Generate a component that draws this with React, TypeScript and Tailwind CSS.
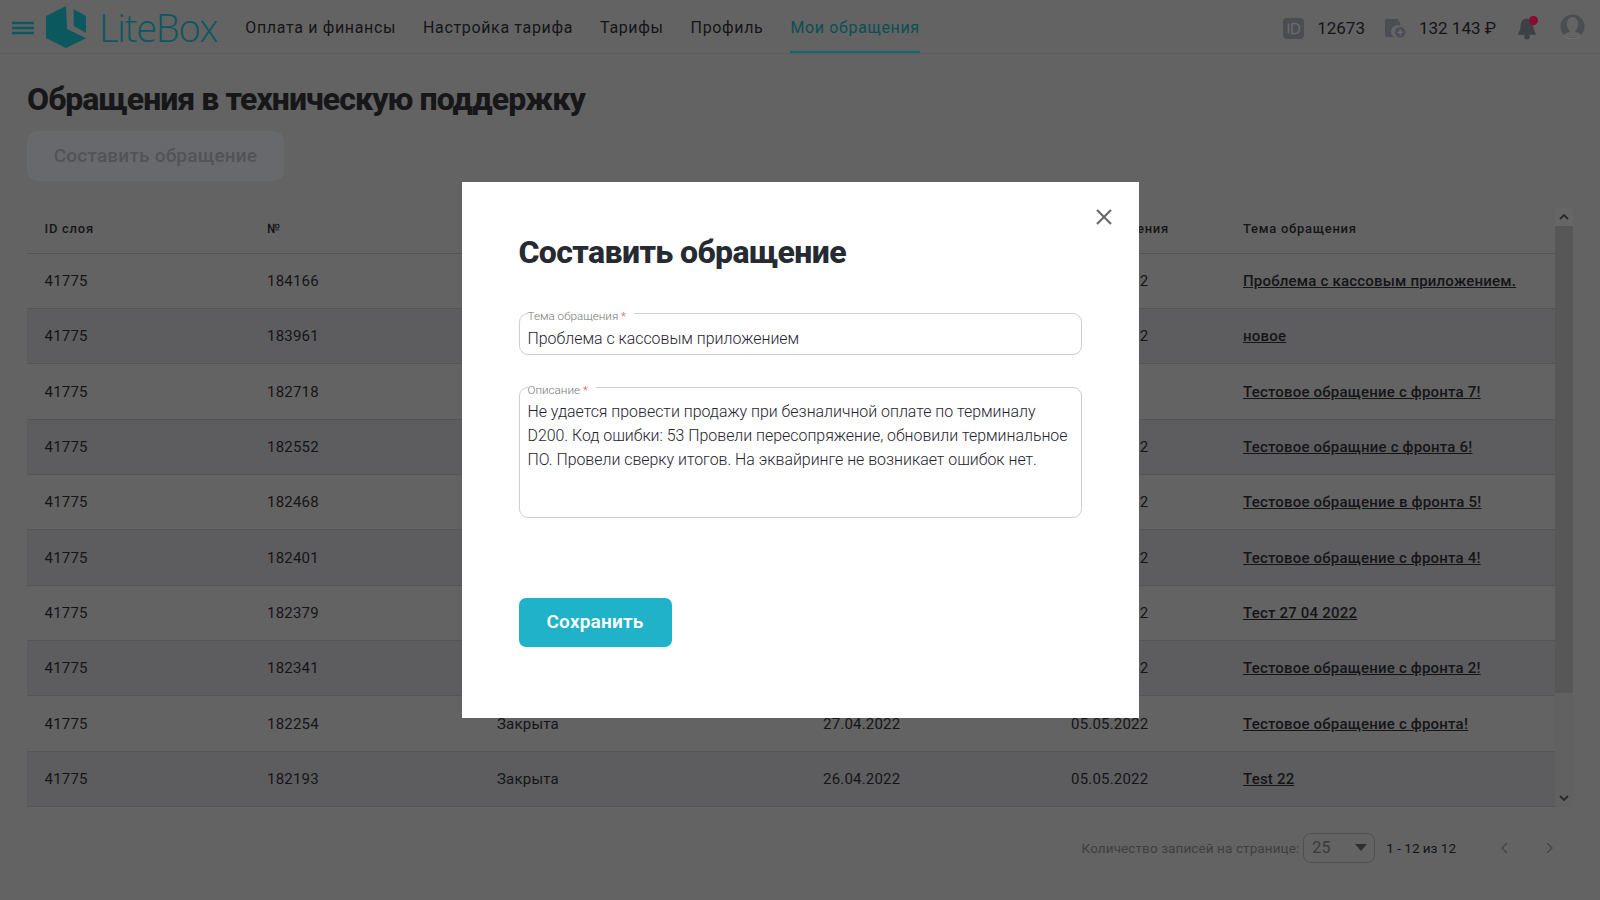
const rows = [
  ["184166", "Проблема с кассовым приложением.", "", "05.05.2022", ""],
  ["183961", "новое", "", "05.05.2022", ""],
  ["182718", "Тестовое обращение с фронта 7!", "", "", ""],
  ["182552", "Тестовое обращние с фронта 6!", "", "05.05.2022", ""],
  ["182468", "Тестовое обращение в фронта 5!", "", "05.05.2022", ""],
  ["182401", "Тестовое обращение с фронта 4!", "", "05.05.2022", ""],
  ["182379", "Тест 27 04 2022", "", "05.05.2022", ""],
  ["182341", "Тестовое обращение с фронта 2!", "", "05.05.2022", ""],
  ["182254", "Тестовое обращение с фронта!", "27.04.2022", "05.05.2022", "Закрыта"],
  ["182193", "Test 22", "26.04.2022", "05.05.2022", "Закрыта"],
];

const nav = ["Оплата и финансы", "Настройка тарифа", "Тарифы", "Профиль"];

function Logo() {
  return (
    <svg width="40" height="42" viewBox="0 0 40 42" className="shrink-0">
      <path d="M20 0L0 10V32L20 42L40 32.3L21 23Z" fill="#0b585f" />
      <path d="M27.7 3.3L40 10V26.7L27.7 20Z" fill="#0b585f" />
    </svg>
  );
}

export default function App() {
  return (
    <div className="relative h-[900px] w-[1600px] overflow-hidden bg-[#636363] font-['Roboto',sans-serif] text-[#151518]">
      <header className="flex h-[54px] items-center border-b border-[#5c5c5c] pr-[15px] pl-3">
        <svg width="22" height="14" viewBox="0 0 22 14" className="mt-[2px] mr-[12px] shrink-0">
          <path d="M0 2h22M0 7h22M0 12h22" stroke="#0b585f" strokeWidth="2.4" />
        </svg>
        <Logo />
        <span className="ml-[13px] font-['Open_Sans',sans-serif] text-[38px] leading-none font-light tracking-[-1.2px] text-[#0b585f]">LiteBox</span>
        <nav className="ml-[28px] flex h-full gap-[27px] text-base tracking-[0.65px]">
          {nav.map((n) => (
            <a key={n} className="flex items-center pt-[3px]">{n}</a>
          ))}
          <a className="flex items-center border-b-2 border-[#0b6b75] pt-[5px] text-[#0a4f56]">Мои обращения</a>
        </nav>
        <div className="ml-auto flex items-center pt-[3px] text-[17px]">
          <svg width="21" height="21" viewBox="0 0 21 21" className="mr-[13px]">
            <rect width="21" height="21" rx="4" fill="#4b4d53" />
            <path d="M5.5 5.5v10" stroke="#6a6a6a" strokeWidth="1.6" />
            <path d="M9 5.5h3.2a4 4 0 0 1 4 5 4 4 0 0 1-4 5H9z" fill="none" stroke="#6a6a6a" strokeWidth="1.6" />
          </svg>
          <span className="pt-[1px]">12673</span>
          <svg width="21" height="21" viewBox="0 0 22 22" className="mr-[13px] ml-[20px]">
            <path d="M2 2h12v2H2zM0 3a2 2 0 0 1 2-2h12v3h2v4a7 7 0 0 0-7 12H2a2 2 0 0 1-2-2z" fill="#4b4d53" />
            <circle cx="16" cy="15" r="5.5" fill="#4b4d53" />
            <path d="M13 15h6M16 12v6" stroke="#6a6a6a" strokeWidth="1.6" />
          </svg>
          <span className="pt-[1px]">132 143 ₽</span>
          <div className="relative mr-[23px] ml-[21px] h-[25px] w-[20px]">
            <svg width="20" height="25" viewBox="0 0 22 26">
              <path d="M11 2a7 7 0 0 1 7 7c0 7 3 9 3 11H1c0-2 3-4 3-11a7 7 0 0 1 7-7z" fill="#3e4045" />
              <circle cx="11" cy="22" r="3" fill="#3e4045" />
            </svg>
            <span className="absolute top-[0px] right-[-1px] h-[9px] w-[9px] rounded-full bg-[#8b0a30]" />
          </div>
          <svg width="25" height="25" viewBox="0 0 26 26" className="mt-[-3px]">
            <circle cx="13" cy="13" r="12.5" fill="#4b4d53" />
            <ellipse cx="13" cy="10.5" rx="6" ry="7.5" fill="#646464" />
            <path d="M10 16h6v3c3 0 5 1.5 6 3-4 3.500-14 3.500-18 0 1-1.500 3-3 6-3z" fill="#646464" />
            <path d="M4.500 22.500a12 12 0 0 0 17 0" fill="none" stroke="#777" strokeWidth="1" />
          </svg>
        </div>
      </header>

      <main className="px-[27px]">
        <h1 className="mt-[26px] text-[32px] leading-[38px] font-extrabold tracking-[-0.95px] text-[#17171a]">Обращения в техническую поддержку</h1>
        <button className="mt-[13px] block h-[50px] w-[257px] rounded-[10px] bg-[#68696c] text-[19px] font-medium tracking-[0.2px] text-[#515358]">Составить обращение</button>

        <div className="relative mt-[26px] w-[1528px]">
          <div className="flex h-[46.500px] items-end border-b border-[#545454] pb-[14px] text-[13px] font-medium tracking-[0.73px]">
            <div className="w-[240px] pl-[17.5px]">ID слоя</div>
            <div className="w-[230px]">№</div>
            <div className="w-[326px]" />
            <div className="w-[248px]" />
            <div className="w-[172px] pl-[2px] whitespace-nowrap">Дата решения</div>
            <div>Тема обращения</div>
          </div>
          {rows.map((r, i) => (
            <div key={r[0]} className={`flex h-[55.35px] items-center border-b border-[#545454] pt-[1px] text-[15px] tracking-[0.2px] ${i % 2 ? "bg-[#5d5d5f]" : ""}`}>
              <div className="w-[240px] pl-[17.5px]">41775</div>
              <div className="w-[230px]">{r[0]}</div>
              <div className="w-[326px]">{r[4]}</div>
              <div className="w-[248px]">{r[2]}</div>
              <div className="w-[172px]">{r[3]}</div>
              <div className="font-medium underline">{r[1]}</div>
            </div>
          ))}
          <div className="absolute top-[1px] left-[1528px] h-[599px] w-[18px] bg-[#616161]">
            <div className="flex h-[18px] items-center justify-center bg-[#666666]">
              <svg width="10" height="6" viewBox="0 0 10 6"><path d="M1 5l4-4 4 4" fill="none" stroke="#2a2a2a" strokeWidth="1.8" /></svg>
            </div>
            <div className="h-[467px] bg-[#575757]" />
            <div className="absolute bottom-0 flex h-[18px] w-full items-center justify-center">
              <svg width="10" height="6" viewBox="0 0 10 6"><path d="M1 1l4 4 4-4" fill="none" stroke="#2a2a2a" strokeWidth="1.8" /></svg>
            </div>
          </div>
        </div>

        <div className="mt-[26px] flex items-center justify-end pr-[19px] text-[13.5px]">
          <span className="tracking-[0.1px] text-[#3f3f3f]">Количество записей на странице:</span>
          <div className="ml-[4px] flex h-[30px] w-[72px] items-center justify-between rounded-[8px] border border-[#505050] pr-[7px] pl-[8px] text-[16px] tracking-[0.3px] text-[#3a3a3a]">
            25
            <svg width="12" height="7" viewBox="0 0 12 7"><path d="M0 0h12L6 7z" fill="#2f2f2f" /></svg>
          </div>
          <span className="ml-[11px]">1 - 12 из 12</span>
          <svg width="9" height="14" viewBox="0 0 9 14" className="ml-[44px]"><path d="M7 2L2 7l5 5" fill="none" stroke="#444" strokeWidth="1.4" /></svg>
          <svg width="9" height="14" viewBox="0 0 9 14" className="ml-[36px]"><path d="M2 2l5 5-5 5" fill="none" stroke="#444" strokeWidth="1.4" /></svg>
        </div>
      </main>

      <div className="absolute inset-0 flex items-center justify-center">
        <div className="relative h-[536px] w-[677px] bg-white px-[57px] pt-[51px] text-[#262a33]">
          <button className="absolute top-[26px] right-[26px]">
            <svg width="18" height="18" viewBox="0 0 18 18" className="block"><path d="M2 2l14 14M16 2L2 16" stroke="#666" strokeWidth="2" /></svg>
          </button>
          <h2 className="text-[32px] leading-[38px] font-extrabold tracking-[-0.6px]">Составить обращение</h2>

          <fieldset className="mt-[36.500px] h-[47.500px] rounded-[9px] border border-[#cfcfcf] pr-[7px] pl-[8px]">
            <legend className="pr-[8px] text-[11.7px] leading-[12px] font-light text-[#777]"><span className="relative top-[2.5px]">Тема обращения <span className="text-[#e2574c]">*</span></span></legend>
            <div className="pt-[7px] text-[15.9px] leading-[24px] font-light text-[#1f2430]">Проблема с кассовым приложением</div>
          </fieldset>

          <fieldset className="mt-[26.500px] h-[136px] rounded-[9px] border border-[#cfcfcf] pr-[7px] pl-[8px]">
            <legend className="pr-[8px] text-[11.7px] leading-[12px] font-light text-[#777]"><span className="relative top-[2.5px]">Описание <span className="text-[#e2574c]">*</span></span></legend>
            <div className="mt-[6px] text-[15.9px] leading-[24.4px] font-light text-[#1f2430]">Не удается провести продажу при безналичной оплате по терминалу D200. Код ошибки: 53 Провели пересопряжение, обновили терминальное ПО. Провели сверку итогов. На эквайринге не возникает ошибок нет.</div>
          </fieldset>

          <button className="mt-[80px] block h-[49px] w-[153px] rounded-[7px] bg-[#1fb2c8] pt-[1px] text-[19px] font-semibold tracking-[0.2px] text-white">Сохранить</button>
        </div>
      </div>
    </div>
  );
}
